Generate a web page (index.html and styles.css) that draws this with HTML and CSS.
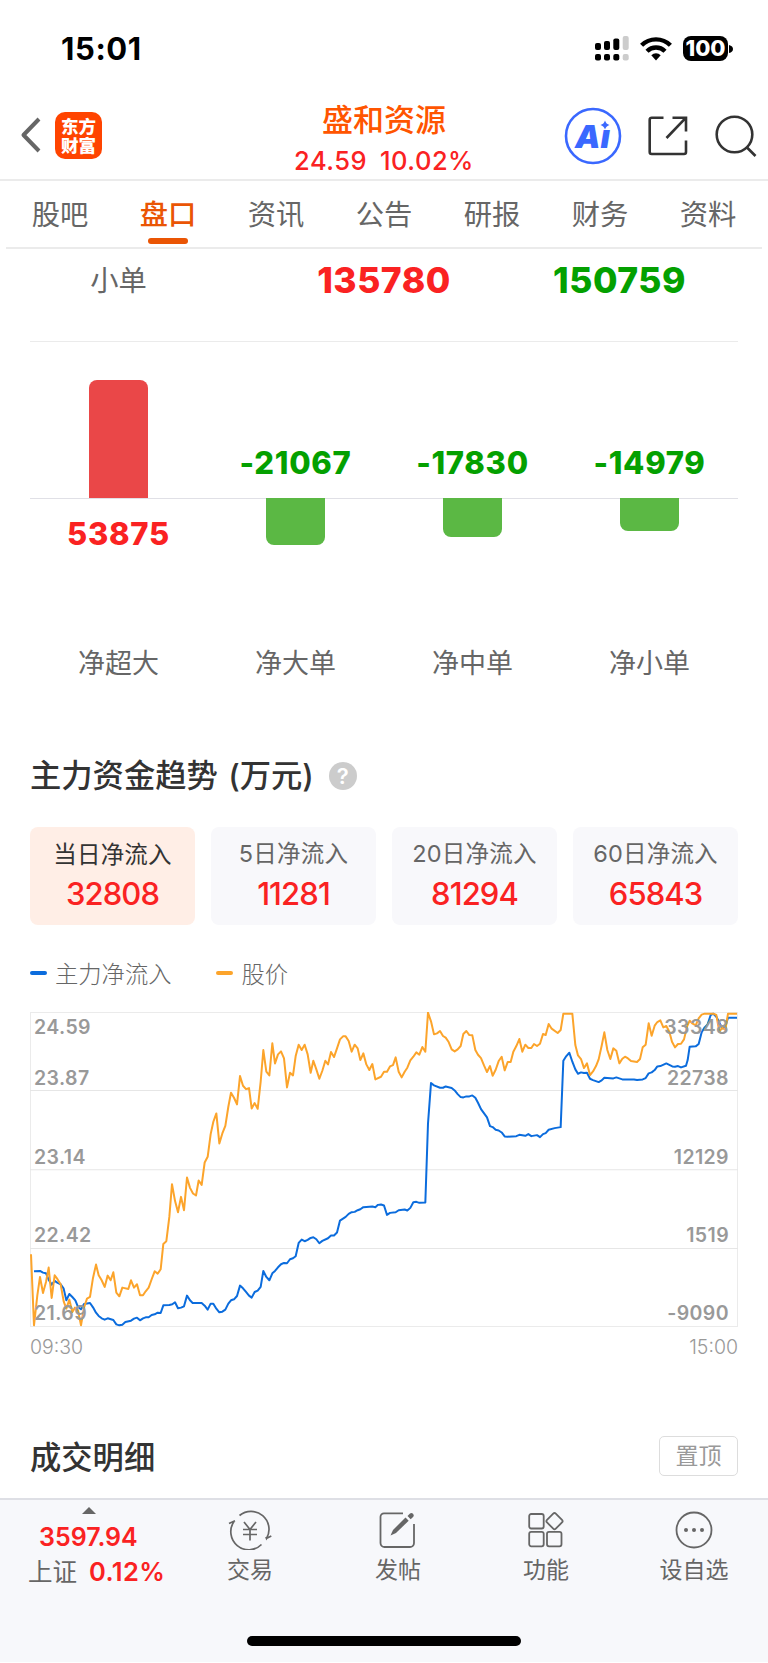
FILE: index.html
```
<!DOCTYPE html>
<html lang="zh-CN">
<head>
  <meta charset="UTF-8">
  <meta name="viewport" content="width=device-width, initial-scale=1.0">
  <title>盛和资源</title>
  <link rel="stylesheet" href="styles.css">
</head>
<body>

  <!-- Status bar -->
  <div class="status-bar">
    <span class="time">15:01</span>
    <div class="status-icons">
      <svg width="34" height="25" viewBox="0 0 34 25">
        <g fill="#000">
          <rect x="0" y="7" width="6" height="7" rx="2"/>
          <rect x="9" y="5" width="6" height="9" rx="2"/>
          <rect x="18.3" y="2.5" width="6" height="11.5" rx="2"/>
          <rect x="0" y="18" width="6" height="6.5" rx="2"/>
          <rect x="9" y="18" width="6" height="6.5" rx="2"/>
          <rect x="18.3" y="18" width="6" height="6.5" rx="2"/>
        </g>
        <g fill="#ccc">
          <rect x="27.7" y="0" width="6" height="14" rx="2"/>
          <rect x="27.7" y="18" width="6" height="6.5" rx="2"/>
        </g>
      </svg>
      <svg class="wifi" width="32" height="24" viewBox="0 0 32 24">
        <g fill="none" stroke="#000" stroke-width="4.4">
          <path d="M1.6 8.3a20.5 20.5 0 0 1 28.8 0"/>
          <path d="M7 14.2a12.8 12.8 0 0 1 18 0"/>
        </g>
        <path d="M11.3 18.2a6.8 6.8 0 0 1 9.4 0L16 23.4z"/>
      </svg>
      <span class="battery">100</span>
      <svg class="battery-cap" width="4" height="8" viewBox="0 0 4 8"><path d="M0 0q4 1 4 4t-4 4z"/></svg>
    </div>
  </div>

  <!-- Header -->
  <div class="header">
    <div class="header-left">
      <svg width="22" height="38" viewBox="0 0 22 38" fill="none" stroke="#666" stroke-width="4" stroke-linejoin="round">
        <path d="M20 3L4.500 19L20 35"/>
      </svg>
      <div class="logo">东方<br>财富</div>
    </div>
    <div class="header-title">
      <div class="stock-name">盛和资源</div>
      <div class="stock-price"><span>24.59</span><span>10.02%</span></div>
    </div>
    <div class="header-right">
      <svg width="58" height="58" viewBox="0 0 58 58">
        <circle cx="29" cy="29" r="27" fill="none" stroke="#3a68ff" stroke-width="2.600"/>
        <text class="ai-text" x="11" y="40.500">Aı</text>
        <path d="M41 13.500q1 3.500 4.500 4.500q-3.500 1-4.500 4.500q-1-3.500-4.500-4.500q3.500-1 4.500-4.500z" fill="#3a68ff"/>
      </svg>
      <svg class="share" width="40" height="40" viewBox="0 0 40 40" fill="none" stroke="#333" stroke-width="2.600">
        <path d="M15.500 1.700H3.700a2 2 0 0 0-2 2V36a2 2 0 0 0 2 2H36a2 2 0 0 0 2-2V24.500"/>
        <path d="M24.500 1.700H38V15.500M38 1.700L18.500 22"/>
      </svg>
      <svg class="search" width="42" height="42" viewBox="0 0 42 42" fill="none" stroke="#333" stroke-width="2.600">
        <circle cx="19.500" cy="19.500" r="17.800"/>
        <path d="M31.500 32L40.500 41"/>
      </svg>
    </div>
  </div>

  <!-- Tabs -->
  <div class="tabs">
    <div class="tab">股吧</div>
    <div class="tab active">盘口</div>
    <div class="tab">资讯</div>
    <div class="tab">公告</div>
    <div class="tab">研报</div>
    <div class="tab">财务</div>
    <div class="tab">资料</div>
  </div>

  <!-- Order flow -->
  <div class="order-row">
    <div class="order-name">小单</div>
    <div class="order-buy">135780</div>
    <div class="order-sell">150759</div>
  </div>

  <div class="bars">
    <div class="bar-col">
      <div class="bar-top"><div class="bar up" style="height: 118px"></div></div>
      <div class="bar-bottom"><div class="bar-value red">53875</div></div>
      <div class="bar-name">净超大</div>
    </div>
    <div class="bar-col">
      <div class="bar-top"><div class="bar-value green">-21067</div></div>
      <div class="bar-bottom"><div class="bar down" style="height: 47px"></div></div>
      <div class="bar-name">净大单</div>
    </div>
    <div class="bar-col">
      <div class="bar-top"><div class="bar-value green">-17830</div></div>
      <div class="bar-bottom"><div class="bar down" style="height: 39px"></div></div>
      <div class="bar-name">净中单</div>
    </div>
    <div class="bar-col">
      <div class="bar-top"><div class="bar-value green">-14979</div></div>
      <div class="bar-bottom"><div class="bar down" style="height: 33px"></div></div>
      <div class="bar-name">净小单</div>
    </div>
  </div>

  <!-- Main capital trend -->
  <div class="section-title">
    <span>主力资金趋势 (万元)</span>
    <span class="help">?</span>
  </div>

  <div class="cards">
    <div class="card selected"><div class="card-name">当日净流入</div><div class="card-value">32808</div></div>
    <div class="card"><div class="card-name">5日净流入</div><div class="card-value">11281</div></div>
    <div class="card"><div class="card-name">20日净流入</div><div class="card-value">81294</div></div>
    <div class="card"><div class="card-name">60日净流入</div><div class="card-value">65843</div></div>
  </div>

  <div class="legend">
    <div class="legend-item"><i class="dash blue"></i>主力净流入</div>
    <div class="legend-item"><i class="dash orange"></i>股价</div>
  </div>

  <div class="chart">
    <svg class="chart-lines" viewBox="30 36 2124 944" preserveAspectRatio="none" fill="none" stroke-width="6" stroke-linejoin="round">
      <path stroke="#e6e6e6" stroke-width="3" d="M30 271.500H2154M30 508.500H2154M30 744.500H2154"/>
      <polyline stroke="#0b6cdd" points="42,813 60,812 69,817 78,819 86,838 95,853 104,842 113,848 122,852 131,865 139,900 148,881 157,890 166,900 174,920 183,927 192,911 210,908 219,921 228,937 236,947 245,954 254,958 263,954 280,959 289,972 298,975 307,973 316,965 333,961 342,955 351,952 360,960 369,954 377,951 386,951 395,944 404,942 413,937 422,938 430,915 448,914 457,912 465,906 474,924 483,922 492,918 501,886 510,900 518,908 545,908 554,916 563,928 572,910 580,910 589,925 598,936 607,934 616,928 625,910 633,900 642,897 651,887 660,856 669,864 678,875 687,886 695,892 704,875 713,871 722,860 730,812 739,830 748,840
        757,819 765,812 774,801 783,792 792,788 801,789 810,777 819,774 827,768 836,728 845,718 854,723 863,719 872,713 880,711 889,717 898,729 907,722 924,714 933,706 942,706 951,697 960,661 977,650 986,641 995,636 1004,635 1013,630 1021,627 1030,621 1057,619 1066,621 1074,614 1083,613 1092,616 1101,644 1110,638 1127,636 1136,630 1154,628 1162,631 1171,623 1180,606 1189,605 1198,608 1216,607 1224,370 1233,249 1242,256 1260,263 1269,263 1277,259 1295,264 1304,271 1313,282 1322,291 1330,292 1339,289 1348,289 1357,286 1366,293 1374,308 1383,327 1401,352 1410,378 1418,381 1427,389 1436,391 1445,397 1454,409 1463,410
        1489,408 1498,404 1516,407 1525,402 1534,408 1551,405 1560,411 1569,402 1577,399 1586,389 1604,384 1622,381 1630,182 1639,168 1648,158 1657,185 1666,208 1674,221 1683,217 1692,219 1701,218 1710,236 1719,240 1736,246 1745,241 1753,233 1780,235 1789,232 1807,238 1842,238 1851,240 1868,238 1877,234 1886,220 1895,217 1904,210 1912,199 1921,198 1939,190 1957,199 1965,200 1974,198 1983,202 1998,197 2003,180 2009,140 2027,139 2036,132 2045,97 2054,82 2063,73 2072,45 2080,41 2089,50 2107,85 2116,80 2124,53 2151,53"/>
      <polyline stroke="#fca42b" points="33,762 42,975 52,885 60,830 69,878 78,845 86,802 95,893 104,825 112,836 122,852 131,903 139,925 148,898 157,935 165,922 174,930 183,975 192,922 201,895 210,890 219,833 228,793 236,825 245,840 254,860 263,826 272,840 280,816 289,877 298,888 307,862 325,866 333,840 342,862 351,852 360,885 369,885 377,873 386,862 395,837 404,813 413,820 422,807 430,731 439,723 448,650 456,552 465,602 474,636 483,590 492,630 501,532 510,563 519,580 528,586 536,541 545,554 554,487 563,470 572,402 580,365 589,340 598,430 607,400 616,377 625,320 633,278 642,293 651,313 660,228 669,257 678,267 687,264 695,325 704,309 713,326 722,245 730,150 739,215 748,226
        757,130 765,190 774,163 783,154 792,175 801,262 810,218 819,226 827,168 836,134 845,150 854,134 863,163 872,218 880,182 889,208 898,236 907,212 916,182 924,193 933,156 942,171 951,145 960,118 969,109 977,109 986,123 995,155 1004,134 1013,145 1021,180 1030,160 1039,193 1048,210 1057,192 1066,238 1083,230 1092,215 1101,215 1110,199 1119,195 1127,172 1136,215 1145,232 1154,215 1162,203 1171,181 1180,170 1189,157 1198,164 1207,141 1216,155 1224,38 1233,64 1242,103 1251,100 1260,93 1269,108 1277,113 1286,126 1295,148 1304,154 1313,148 1322,138 1330,102 1339,93 1348,105 1357,106 1366,150 1374,164 1383,174 1392,196 1401,216 1410,198 1418,227 1427,209 1436,183 1445,170 1454,211 1463,186 1472,186
        1480,155 1489,138 1498,117 1507,155 1516,134 1525,144 1534,144 1542,132 1551,138 1560,131 1569,102 1577,105 1586,72 1595,86 1613,99 1622,90 1630,41 1657,41 1666,135 1674,166 1683,177 1692,204 1701,190 1710,225 1719,214 1728,198 1736,178 1745,137 1753,97 1762,150 1771,177 1780,145 1789,152 1798,190 1807,176 1815,170 1824,175 1833,183 1851,186 1860,177 1868,142 1877,134 1886,70 1895,107 1904,77 1912,66 1921,61 1930,82 1939,78 1948,95 1956,125 1965,142 1974,132 1983,131 1992,118 2001,80 2009,62 2018,71 2027,76 2036,55 2045,44 2054,41 2080,41 2089,45 2098,95 2107,83 2116,90 2124,41 2151,41"/>
    </svg>
    <div class="grid-row first">
      <div class="labels"><span>24.59</span><span>33348</span></div>
      <div class="labels"><span>23.87</span><span>22738</span></div>
    </div>
    <div class="grid-row"><div class="labels"><span>23.14</span><span>12129</span></div></div>
    <div class="grid-row"><div class="labels"><span>22.42</span><span>1519</span></div></div>
    <div class="grid-row"><div class="labels"><span>21.69</span><span>-9090</span></div></div>
  </div>
  <div class="chart-times"><span>09:30</span><span>15:00</span></div>

  <!-- Trade details -->
  <div class="details">
    <span>成交明细</span>
    <div class="top-btn">置顶</div>
  </div>

  <!-- Bottom bar -->
  <div class="bottom-bar">
    <div class="bottom-nav">
      <div class="index">
        <svg class="index-arrow" width="14" height="7" viewBox="0 0 14 7"><path d="M7 0l7 7H0z" fill="#666"/></svg>
        <div class="index-value">3597.94</div>
        <div class="index-change"><span>上证</span><b>0.12%</b></div>
      </div>
      <div class="nav-item">
        <svg width="44" height="40" viewBox="0 0 44 40" fill="none" stroke="#666" stroke-width="1.700">
          <path d="M11.500 5.500A18 18 0 0 1 38.500 28.500l-.6-1.500M38.300 28.500l5-2.500"/>
          <path d="M33.500 34.500A18 18 0 0 1 6 11.500M1 13.500l6-2.700"/>
          <path d="M16 12l6 7.500l6-7.500M15 19.500h14M15 24.500h14M22 19.500v11"/>
        </svg>
        <span>交易</span>
      </div>
      <div class="nav-item">
        <svg width="44" height="40" viewBox="0 0 44 40" fill="none" stroke="#666" stroke-width="1.800">
          <path d="M27 3.300H8a3.500 3.500 0 0 0-3.500 3.500V33a4 4 0 0 0 4 4H34a4 4 0 0 0 4-4V14"/>
          <path d="M14.500 25.500l2.500-5.500L29.500 7.500l3.200 3.200L20 23z" fill="#666" stroke="none"/>
          <path d="M31.500 6l2.500-2.500q1.500-1.200 3 .2q1.500 1.500.3 3L34.700 9.200z" fill="#666" stroke="none"/>
        </svg>
        <span>发帖</span>
      </div>
      <div class="nav-item">
        <svg width="44" height="40" viewBox="0 0 44 40" fill="none" stroke="#666" stroke-width="1.800">
          <rect x="5.200" y="4" width="14.500" height="14.500" rx="2"/>
          <rect x="5.200" y="21.800" width="14.500" height="14.500" rx="2"/>
          <rect x="23" y="21.800" width="14.500" height="14.500" rx="2"/>
          <rect x="24.300" y="5" width="12.400" height="12.400" rx="1.800" transform="rotate(45 30.500 11.200)"/>
        </svg>
        <span>功能</span>
      </div>
      <div class="nav-item">
        <svg width="44" height="40" viewBox="0 0 44 40" fill="none" stroke="#666" stroke-width="1.800">
          <circle cx="22" cy="20" r="17.500"/>
          <g fill="#666" stroke="none"><circle cx="14" cy="20" r="2"/><circle cx="22" cy="20" r="2"/><circle cx="30" cy="20" r="2"/></g>
        </svg>
        <span>设自选</span>
      </div>
    </div>
    <div class="home-indicator"></div>
  </div>

</body>
</html>
```

FILE: styles.css
```
* {
  box-sizing: border-box;
  margin: 0;
  padding: 0;
}
body {
  width: 768px;
  height: 1663px;
  overflow: hidden;
  font-family: Inter, "Noto Sans CJK SC", sans-serif;
  background: #fff;
  color: #666;
}
svg {
  display: block;
  flex: none;
}

/* status bar */
.status-bar {
  height: 92px;
  padding: 5px 35px 0 61px;
  display: flex;
  justify-content: space-between;
  align-items: center;
  color: #000;
}
.time {
  font-size: 31px;
  font-weight: 700;
  letter-spacing: 0.6px;
}
.status-icons {
  display: flex;
  align-items: center;
}
.wifi {
  margin: 0 11px;
}
.battery {
  width: 45px;
  height: 25px;
  border-radius: 8px;
  background: #000;
  color: #fff;
  font-size: 22px;
  font-weight: 800;
  line-height: 25px;
  text-align: center;
}
.battery-cap {
  margin-left: 1px;
}

/* header */
.header {
  height: 89px;
  display: grid;
  grid-template-columns: 1fr 200px 1fr;
  border-bottom: 2px solid #ebebeb;
}
.header-left {
  display: flex;
  align-items: center;
  gap: 14px;
  padding: 0 0 3px 19px;
}
.logo {
  width: 47px;
  height: 47px;
  padding-top: 5px;
  border-radius: 10px;
  background: #ff4400;
  color: #fff;
  font-size: 17.5px;
  font-weight: 900;
  line-height: 19px;
  text-align: center;
}
.header-title {
  text-align: center;
}
.stock-name {
  padding-top: 7px;
  font-size: 31px;
  font-weight: 500;
  line-height: 42px;
  color: #ff5500;
}
.stock-price {
  display: flex;
  justify-content: center;
  gap: 13px;
  font-size: 25.5px;
  font-weight: 500;
  letter-spacing: 0.5px;
  line-height: 40px;
  color: #fa2222;
}
.header-right {
  display: flex;
  align-items: center;
  justify-content: flex-end;
  padding: 0 11px 2px 0;
}
.ai-text {
  font-family: Inter, sans-serif;
  font-size: 32px;
  font-weight: 900;
  font-style: italic;
  fill: #3a68ff;
}
.share {
  margin: 0 27px 0 26px;
}

/* tabs */
.tabs {
  height: 68px;
  margin: 0 6px;
  display: flex;
  border-bottom: 2px solid #ebebeb;
}
.tab {
  flex: 1;
  display: flex;
  flex-direction: column;
  align-items: center;
  font-size: 28.3px;
  line-height: 69px;
}
.tab.active {
  color: #ea5504;
  font-weight: 500;
}
.tab.active::after {
  content: "";
  width: 40px;
  height: 6px;
  margin-top: -12px;
  border-radius: 3px;
  background: #ea5504;
}

/* order flow */
.order-row {
  height: 93px;
  margin: 0 30px;
  display: grid;
  grid-template-columns: 177px 354px 1fr;
  border-bottom: 1px solid #ebebeb;
  text-align: center;
  line-height: 63px;
}
.order-name {
  font-size: 28.3px;
  line-height: 65px;
}
.order-buy, .order-sell {
  font-size: 35.5px;
  font-weight: 800;
  letter-spacing: 0.5px;
}
.order-buy {
  color: #fa2222;
}
.order-sell {
  margin-left: -60px;
  color: #04a000;
}
.bars {
  margin: 0 30px;
  display: grid;
  grid-template-columns: repeat(4, 1fr);
}
.bar-col {
  text-align: center;
}
.bar-top {
  height: 157px;
  display: flex;
  flex-direction: column;
  justify-content: flex-end;
  align-items: center;
  border-bottom: 1px solid #e0e0e6;
}
.bar-bottom {
  height: 143px;
  display: flex;
  flex-direction: column;
  align-items: center;
}
.bar {
  width: 59px;
}
.bar.up {
  border-radius: 8px 8px 0 0;
  background: #ea4748;
}
.bar.down {
  margin-top: -1px;
  border-radius: 0 0 8px 8px;
  background: #5bb844;
}
.bar-value {
  font-size: 31px;
  font-weight: 800;
  letter-spacing: 0.7px;
  line-height: 70px;
}
.red {
  color: #fa2222;
}
.green {
  color: #04a000;
}
.bar-name {
  font-size: 27px;
  line-height: 43px;
}

/* capital trend */
.section-title {
  height: 142px;
  padding: 41px 30px 0;
  display: flex;
  gap: 15px;
  font-size: 31.3px;
  font-weight: 500;
  line-height: 100px;
  color: #333;
  word-spacing: 2px;
}
.help {
  width: 28px;
  height: 28px;
  margin-top: 36px;
  border-radius: 50%;
  background: #ccc;
  color: #fff;
  font-size: 22px;
  font-weight: 600;
  line-height: 28px;
  text-align: center;
}
.cards {
  margin: 0 30px;
  display: grid;
  grid-template-columns: repeat(4, 1fr);
  gap: 16px;
}
.card {
  height: 98px;
  padding-top: 9px;
  border-radius: 8px;
  background: #f8f8fb;
  text-align: center;
}
.card.selected {
  padding-top: 11px;
  background: #ffeee6;
}
.card-name {
  font-size: 23.5px;
  letter-spacing: 0.2px;
  line-height: 36px;
}
.selected .card-name {
  line-height: 34px;
  color: #333;
}
.card-value {
  font-size: 31px;
  font-weight: 500;
  letter-spacing: -0.9px;
  line-height: 44px;
  color: #fa2222;
}
.legend {
  height: 87px;
  padding: 0 30px;
  display: flex;
  gap: 45px;
}
.legend-item {
  display: flex;
  align-items: center;
  gap: 8px;
  height: 96px;
  font-size: 23.3px;
  font-weight: 300;
}
.dash {
  width: 17px;
  height: 4px;
  border-radius: 2px;
}
.blue {
  background: #0b6cdd;
}
.orange {
  background: #fca42b;
}
.chart {
  position: relative;
  height: 315px;
  margin: 0 30px;
  display: grid;
  grid-template-rows: repeat(4, 1fr);
  border: 1px solid #ebebeb;
}
/* the two series lie under the axis labels */
.chart-lines {
  position: absolute;
  inset: -1px;
  width: 708px;
  height: 315px;
}
.grid-row {
  position: relative;
  display: flex;
  flex-direction: column;
  justify-content: flex-end;
}
.grid-row.first {
  justify-content: space-between;
  padding-top: 2px;
}
.labels {
  padding: 0 8px 1px 3px;
  display: flex;
  justify-content: space-between;
  font-size: 19.5px;
  font-weight: 600;
  letter-spacing: 0.4px;
  line-height: 24px;
  color: #999;
}
.chart-times {
  height: 84px;
  margin: 0 30px;
  display: flex;
  justify-content: space-between;
  font-size: 19.5px;
  font-weight: 300;
  line-height: 41px;
  color: #999;
}

/* trade details */
.details {
  height: 87px;
  margin: 0 30px;
  padding-top: 2px;
  display: flex;
  align-items: center;
  justify-content: space-between;
  font-size: 31.3px;
  font-weight: 500;
  color: #333;
}
.top-btn {
  width: 79px;
  height: 40px;
  border: 1px solid #ddd;
  border-radius: 5px;
  font-size: 23px;
  font-weight: 400;
  line-height: 38px;
  text-align: center;
  color: #999;
}

/* bottom bar */
.bottom-bar {
  height: 164px;
  border-top: 2px solid #dedfe5;
  background: #f7f8fb;
}
.bottom-nav {
  height: 136px;
  display: grid;
  grid-template-columns: 176px repeat(4, 148px);
}
.index {
  padding-top: 7px;
}
.index-arrow {
  margin-left: 82px;
}
.index-value {
  margin-left: 39px;
  font-size: 25px;
  font-weight: 600;
  line-height: 46px;
  color: #fa2222;
}
.index-change {
  margin-left: 28px;
  display: flex;
  gap: 12px;
  font-size: 24.5px;
  line-height: 24px;
}
.index-change b {
  font-size: 25.5px;
  font-weight: 600;
  letter-spacing: 0.4px;
  color: #fa2222;
}
.nav-item {
  padding-top: 10px;
  display: flex;
  flex-direction: column;
  align-items: center;
  font-size: 23px;
  line-height: 40px;
}
.home-indicator {
  width: 274px;
  height: 10px;
  margin: 0 auto;
  border-radius: 5px;
  background: #000;
}
```
